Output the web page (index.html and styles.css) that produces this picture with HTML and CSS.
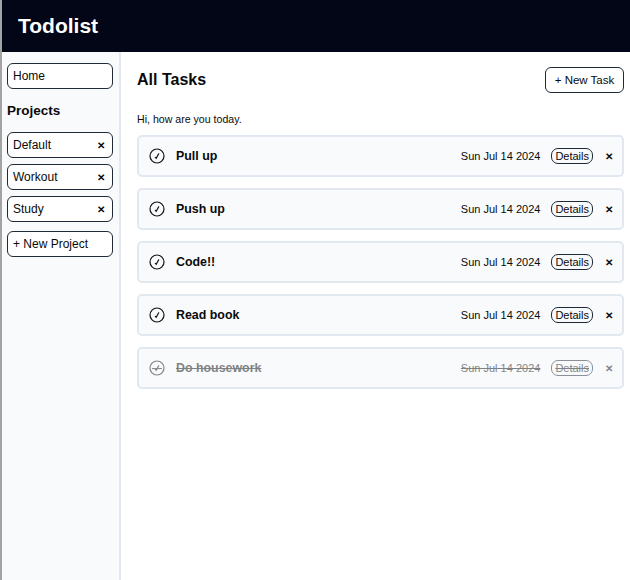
FILE: index.html
```html
<!DOCTYPE html>
<html>
<head>
<meta charset="utf-8">
<link rel="stylesheet" href="styles.css">
</head>
<body>
<div class="app">
  <header class="header"><h1 class="logo">Todolist</h1></header>
  <div class="body">
    <aside class="sidebar">
      <button class="nav-btn">Home</button>
      <h2 class="projects-title">Projects</h2>
      <div class="project-list">
        <div class="project"><span>Default</span><span class="x">&#x2715;</span></div>
        <div class="project"><span>Workout</span><span class="x">&#x2715;</span></div>
        <div class="project"><span>Study</span><span class="x">&#x2715;</span></div>
      </div>
      <button class="nav-btn new-project">+ New Project</button>
    </aside>
    <main class="main">
      <div class="main-head">
        <h2 class="main-title">All Tasks</h2>
        <button class="new-task">+ New Task</button>
      </div>
      <p class="greeting">Hi, how are you today.</p>
      <div class="tasks">
        <div class="task">
          <span class="check"><svg viewBox="0 0 16 16" width="16" height="16"><circle cx="8" cy="8" r="7" fill="none" stroke="#111" stroke-width="1.2"/><path d="M6.3 9.4 L7.2 10.3 L9.7 5.8" fill="none" stroke="#111" stroke-width="1.2" stroke-linecap="round"/></svg></span>
          <span class="t-title">Pull up</span>
          <span class="t-date">Sun Jul 14 2024</span>
          <button class="details">Details</button>
          <span class="del">&#x2715;</span>
        </div>
        <div class="task">
          <span class="check"><svg viewBox="0 0 16 16" width="16" height="16"><circle cx="8" cy="8" r="7" fill="none" stroke="#111" stroke-width="1.2"/><path d="M6.3 9.4 L7.2 10.3 L9.7 5.8" fill="none" stroke="#111" stroke-width="1.2" stroke-linecap="round"/></svg></span>
          <span class="t-title">Push up</span>
          <span class="t-date">Sun Jul 14 2024</span>
          <button class="details">Details</button>
          <span class="del">&#x2715;</span>
        </div>
        <div class="task">
          <span class="check"><svg viewBox="0 0 16 16" width="16" height="16"><circle cx="8" cy="8" r="7" fill="none" stroke="#111" stroke-width="1.2"/><path d="M6.3 9.4 L7.2 10.3 L9.7 5.8" fill="none" stroke="#111" stroke-width="1.2" stroke-linecap="round"/></svg></span>
          <span class="t-title">Code!!</span>
          <span class="t-date">Sun Jul 14 2024</span>
          <button class="details">Details</button>
          <span class="del">&#x2715;</span>
        </div>
        <div class="task">
          <span class="check"><svg viewBox="0 0 16 16" width="16" height="16"><circle cx="8" cy="8" r="7" fill="none" stroke="#111" stroke-width="1.2"/><path d="M6.3 9.4 L7.2 10.3 L9.7 5.8" fill="none" stroke="#111" stroke-width="1.2" stroke-linecap="round"/></svg></span>
          <span class="t-title">Read book</span>
          <span class="t-date">Sun Jul 14 2024</span>
          <button class="details">Details</button>
          <span class="del">&#x2715;</span>
        </div>
        <div class="task done">
          <span class="check"><svg viewBox="0 0 16 16" width="16" height="16"><circle cx="8" cy="8" r="7" fill="none" stroke="#111" stroke-width="1.2"/><path d="M6.3 9.4 L7.2 10.3 L9.7 5.8" fill="none" stroke="#111" stroke-width="1.2" stroke-linecap="round"/><line x1="3" y1="8.6" x2="13" y2="8.6" stroke="#111" stroke-width="1"/></svg></span>
          <span class="t-title">Do housework</span>
          <span class="t-date">Sun Jul 14 2024</span>
          <button class="details">Details</button>
          <span class="del">&#x2715;</span>
        </div>
      </div>
    </main>
  </div>
</div>
</body>
</html>
```
FILE: styles.css
```css
* { box-sizing: border-box; }
html, body { margin: 0; padding: 0; height: 100%; }
body {
  font-family: "Liberation Sans", Arial, sans-serif;
  color: #0a0a0a;
  background: #fff;
}
.app {
  display: flex;
  flex-direction: column;
  height: 580px;
  border-left: 2px solid #a3a3a3;
}
.header {
  background: #020617;
  height: 52px;
  display: flex;
  align-items: center;
  padding-left: 16px;
  flex-shrink: 0;
}
.logo {
  margin: 0;
  color: #fff;
  font-size: 21px;
  font-weight: bold;
}
.body { display: flex; flex: 1; }
.sidebar {
  width: 119px;
  background: #f8fafc;
  border-right: 2px solid #e2e8f0;
  padding: 11px 6px 0 5px;
  display: flex;
  flex-direction: column;
}
.nav-btn, .project {
  font-family: inherit;
  font-size: 12px;
  color: #0a0a0a;
  background: #fff;
  border: 1px solid #1f2937;
  border-radius: 6px;
  height: 26px;
  text-align: left;
  padding: 0 5px;
  width: 106px;
}
.projects-title {
  font-size: 13.5px;
  font-weight: bold;
  margin: 14px 0 14px;
}
.project-list {
  display: flex;
  flex-direction: column;
  gap: 6px;
}
.project {
  display: flex;
  align-items: center;
  justify-content: space-between;
}
.project .x { font-size: 10px; font-weight: bold; padding-right: 2px; }
.new-project { margin-top: 9px; }
.main {
  flex: 1;
  padding: 15px 6px 0 16px;
}
.main-head {
  display: flex;
  justify-content: space-between;
  align-items: center;
}
.main-title {
  margin: 0;
  font-size: 16px;
  font-weight: bold;
}
.new-task {
  font-family: inherit;
  font-size: 11.5px;
  background: #fff;
  border: 1px solid #1f2937;
  border-radius: 6px;
  height: 26px;
  width: 79px;
  color: #0a0a0a;
}
.greeting {
  font-size: 10.6px;
  margin: 20px 0 10px;
}
.tasks { display: flex; flex-direction: column; gap: 11px; }
.task {
  display: flex;
  align-items: center;
  height: 42px;
  background: #f8fafc;
  border: 2px solid #e2e8f0;
  border-radius: 5px;
  padding: 0 9px 0 10px;
}
.check { display: flex; width: 16px; height: 16px; }
.t-title {
  font-size: 12.4px;
  font-weight: bold;
  margin-left: 11px;
  flex: 1;
}
.t-date { font-size: 11px; }
.details {
  font-family: inherit;
  font-size: 11px;
  background: transparent;
  border: 1px solid #1f2937;
  border-radius: 7px;
  padding: 0 3px;
  height: 16px;
  margin-left: 11px;
  color: #0a0a0a;
}
.del {
  font-size: 9.5px;
  font-weight: bold;
  margin-left: 12px;
}
.task.done > * { opacity: 0.5; }
.task.done .t-title, .task.done .t-date, .task.done .details { text-decoration: line-through; }
```
